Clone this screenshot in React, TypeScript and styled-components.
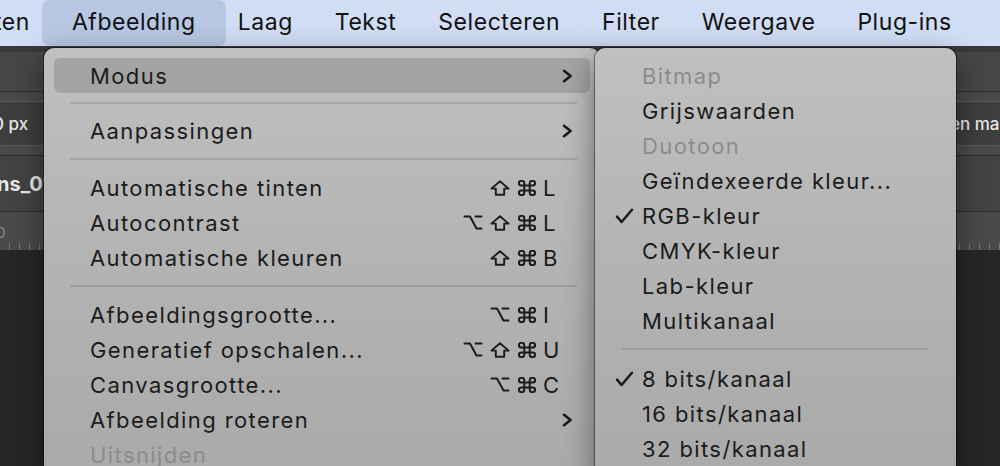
import styled, { createGlobalStyle } from "styled-components";

const GlobalStyle = createGlobalStyle`
	html, body {
		margin: 0;
		padding: 0;
		background: #262626;
	}
	body {
		font-family: Inter, "Noto Sans", sans-serif;
	}
`;

const Page = styled.div`
	position: relative;
	width: 1000px;
	height: 466px;
	overflow: hidden;
	display: flex;
	flex-direction: column;
	background: #262626;
`;

const MenuBar = styled.nav`
	flex: none;
	height: 46px;
	display: flex;
	align-items: stretch;
	background: #d1ddf5;
	color: #111;
	font-size: 23px;
	letter-spacing: 0.55px;
	white-space: nowrap;
`;

const BarItem = styled.div<{ $active?: boolean }>`
	display: flex;
	align-items: center;
	padding: 0 ${(p) => (p.$active ? 30 : 21)}px 3px;
	margin: 0 ${(p) => (p.$active ? -9 : 0)}px;
	border-radius: 8px;
	background: ${(p) => (p.$active ? "#b7c6e2" : "transparent")};
`;

const FirstItem = styled(BarItem)`
	margin-left: -6px;
	padding-left: 0;
`;

const Workspace = styled.div`
	flex: 1;
	display: flex;
	flex-direction: column;
	color: #e8e8e8;
`;

const Band = styled.div<{ $h: number; $bg: string; $line?: string }>`
	flex: none;
	height: ${(p) => p.$h}px;
	background: ${(p) => p.$bg};
	border-bottom: ${(p) => (p.$line ? `1px solid ${p.$line}` : "none")};
`;

const FieldRow = styled.div`
	flex: none;
	height: 43px;
	display: flex;
	align-items: center;
	background: #3e3e3e;
	border-bottom: 1px solid #5a5a5a;
	font-size: 17px;
	font-weight: 500;
	white-space: nowrap;
`;

const FieldSlot = styled.span`
	flex: none;
	width: 957px;
	margin-left: -7px;
`;

const TabRow = styled.div`
	flex: none;
	height: 55px;
	display: flex;
	align-items: center;
	background: #434343;
	border-bottom: 1px solid #2e2e2e;
	font-size: 20px;
	font-weight: 700;
	white-space: nowrap;
`;

const TabTitle = styled.span`
	margin-left: -3px;
`;

const Ruler = styled.div`
	flex: none;
	height: 38px;
	display: flex;
	flex-direction: column;
	justify-content: space-between;
	background: #4a4a4a;
	color: #8a8a8a;
	font-size: 15px;
`;

const RulerNumber = styled.span`
	margin: 11px 0 0 -4px;
`;

const Ticks = styled.div`
	height: 7px;
	background: repeating-linear-gradient(90deg, #757575 0 1px, transparent 1px 10px);
	background-position: 9px 0;
`;

const Canvas = styled.div`
	flex: 1;
	background: #262626;
`;

const Panel = styled.div<{ $left: number; $width: number }>`
	position: absolute;
	left: ${(p) => p.$left}px;
	top: 48px;
	width: ${(p) => p.$width}px;
	height: 440px;
	box-sizing: border-box;
	padding-top: 10px;
	display: flex;
	flex-direction: column;
	border-radius: 10px 10px 0 0;
	background: linear-gradient(180deg, #c0c0c0 0%, #b3b3b3 50%, #a9a9a9 100%);
	box-shadow: 0 0 0 1px rgba(0, 0, 0, 0.4), 0 10px 30px rgba(0, 0, 0, 0.45);
	color: #1b1b1b;
	font-size: 22px;
	letter-spacing: 1.4px;
	white-space: nowrap;
`;

const MainPanel = styled(Panel)`
	padding-left: 10px;
	padding-right: 10px;
`;

const Row = styled.div<{ $hover?: boolean; $disabled?: boolean }>`
	height: 35px;
	flex: none;
	display: grid;
	grid-template-columns: 1fr auto 32px;
	column-gap: 6px;
	align-items: center;
	padding: 0 15px 0 36px;
	border-radius: 6px;
	background: ${(p) => (p.$hover ? "#a4a4a4" : "transparent")};
	color: ${(p) => (p.$disabled ? "#8c8c8c" : "#1b1b1b")};
`;

const SubRow = styled.div<{ $disabled?: boolean }>`
	height: 35px;
	flex: none;
	display: grid;
	grid-template-columns: 27px 1fr;
	align-items: center;
	padding-left: 20px;
	color: ${(p) => (p.$disabled ? "#8c8c8c" : "#1b1b1b")};
`;

const Separator = styled.div<{ $top: number; $bottom: number; $left: number; $right: number }>`
	flex: none;
	height: 2px;
	margin: ${(p) => `${p.$top}px ${p.$right}px ${p.$bottom}px ${p.$left}px`};
	background: rgba(0, 0, 0, 0.11);
`;

const Mods = styled.span`
	display: flex;
	gap: 7px;
	justify-content: flex-end;
	align-items: center;
`;

const Key = styled.span`
	display: flex;
	align-items: center;
	letter-spacing: 0;
`;

const ChevronCell = styled.span`
	display: flex;
	justify-content: flex-end;
	padding-right: 2px;
`;

const Icon = styled.svg`
	display: block;
	fill: none;
	stroke: #1b1b1b;
	stroke-linecap: round;
	stroke-linejoin: round;
`;

const Slot = styled.span`
	width: 20px;
	display: flex;
	justify-content: center;
`;

function Shift() {
	return (
		<Slot>
			<Icon width="20" height="16" viewBox="0 0 20 16" strokeWidth="1.9">
				<path d="M10 1.2 L18.6 8.6 H14.2 V14.8 H5.8 V8.6 H1.4 Z" />
			</Icon>
		</Slot>
	);
}

function Cmd() {
	return (
		<Slot>
			<Icon width="18" height="16" viewBox="2 2 20 20" preserveAspectRatio="none" strokeWidth="2">
				<path vectorEffect="non-scaling-stroke" d="M15 6v12a3 3 0 1 0 3-3H6a3 3 0 1 0 3 3V6a3 3 0 1 0-3 3h12a3 3 0 1 0-3-3" />
			</Icon>
		</Slot>
	);
}

function Opt() {
	return (
		<Slot>
			<Icon width="20" height="15" viewBox="0 0 20 15" strokeWidth="2">
				<path d="M1.5 1.5 H7 L13.5 13.5 H18.5" />
				<path d="M12.5 1.5 H18.5" />
			</Icon>
		</Slot>
	);
}

function Chevron() {
	return (
		<ChevronCell>
			<Icon width="11" height="14" viewBox="0 0 11 14" strokeWidth="2.6">
				<path d="M2 1.8 L8.6 7 L2 12.2" />
			</Icon>
		</ChevronCell>
	);
}

function Check() {
	return (
		<Icon width="19" height="16" viewBox="0 0 19 16" strokeWidth="2.5">
			<path d="M2 8.6 L6.6 14 L17 1.8" />
		</Icon>
	);
}

type Mod = "opt" | "shift" | "cmd";

type Item =
	| { kind: "sep"; top: number; bottom: number }
	| { kind: "item"; label: string; mods?: Mod[]; key?: string; sub?: boolean; hover?: boolean; disabled?: boolean };

const mainItems: Item[] = [
	{ kind: "item", label: "Modus", sub: true, hover: true },
	{ kind: "sep", top: 9, bottom: 9 },
	{ kind: "item", label: "Aanpassingen", sub: true },
	{ kind: "sep", top: 10, bottom: 10 },
	{ kind: "item", label: "Automatische tinten", mods: ["shift", "cmd"], key: "L" },
	{ kind: "item", label: "Autocontrast", mods: ["opt", "shift", "cmd"], key: "L" },
	{ kind: "item", label: "Automatische kleuren", mods: ["shift", "cmd"], key: "B" },
	{ kind: "sep", top: 10, bottom: 10 },
	{ kind: "item", label: "Afbeeldingsgrootte...", mods: ["opt", "cmd"], key: "I" },
	{ kind: "item", label: "Generatief opschalen...", mods: ["opt", "shift", "cmd"], key: "U" },
	{ kind: "item", label: "Canvasgrootte...", mods: ["opt", "cmd"], key: "C" },
	{ kind: "item", label: "Afbeelding roteren", sub: true },
	{ kind: "item", label: "Uitsnijden", disabled: true },
];

type SubItem = { sep: true } | { sep?: false; label: string; checked?: boolean; disabled?: boolean };

const modeItems: SubItem[] = [
	{ label: "Bitmap", disabled: true },
	{ label: "Grijswaarden" },
	{ label: "Duotoon", disabled: true },
	{ label: "Geïndexeerde kleur..." },
	{ label: "RGB-kleur", checked: true },
	{ label: "CMYK-kleur" },
	{ label: "Lab-kleur" },
	{ label: "Multikanaal" },
	{ sep: true },
	{ label: "8 bits/kanaal", checked: true },
	{ label: "16 bits/kanaal" },
	{ label: "32 bits/kanaal" },
];

const modIcon = (m: Mod, i: number) =>
	m === "opt" ? <Opt key={i} /> : m === "shift" ? <Shift key={i} /> : <Cmd key={i} />;

const barItems = ["Laag", "Tekst", "Selecteren", "Filter", "Weergave", "Plug-ins"];

export default function App() {
	return (
		<Page>
			<GlobalStyle />
			<MenuBar>
				<FirstItem>ten</FirstItem>
				<BarItem $active>Afbeelding</BarItem>
				{barItems.map((label) => (
					<BarItem key={label}>{label}</BarItem>
				))}
			</MenuBar>
			<Workspace>
				<Band $h={6} $bg="#393939" />
				<Band $h={39} $bg="#464646" $line="#2d2d2d" />
				<Band $h={9} $bg="#4a4a4a" $line="#5a5a5a" />
				<FieldRow>
					<FieldSlot>0 px</FieldSlot>
					<span>en maskeren...</span>
				</FieldRow>
				<Band $h={9} $bg="#4a4a4a" $line="#2a2a2a" />
				<TabRow>
					<TabTitle>ns_01</TabTitle>
				</TabRow>
				<Ruler>
					<RulerNumber>0</RulerNumber>
					<Ticks />
				</Ruler>
				<Canvas />
			</Workspace>

			<MainPanel $left={44} $width={556}>
				{mainItems.map((it, i) =>
					it.kind === "sep" ? (
						<Separator key={i} $top={it.top} $bottom={it.bottom} $left={16} $right={13} />
					) : (
						<Row key={i} $hover={it.hover} $disabled={it.disabled}>
							<span>{it.label}</span>
							<Mods>{it.mods?.map(modIcon)}</Mods>
							{it.sub ? <Chevron /> : <Key>{it.key}</Key>}
						</Row>
					)
				)}
			</MainPanel>

			<Panel $left={595} $width={361}>
				{modeItems.map((it, i) =>
					it.sep ? (
						<Separator key={i} $top={10} $bottom={11} $left={27} $right={28} />
					) : (
						<SubRow key={i} $disabled={it.disabled}>
							<span>{it.checked ? <Check /> : null}</span>
							<span>{it.label}</span>
						</SubRow>
					)
				)}
			</Panel>
		</Page>
	);
}
